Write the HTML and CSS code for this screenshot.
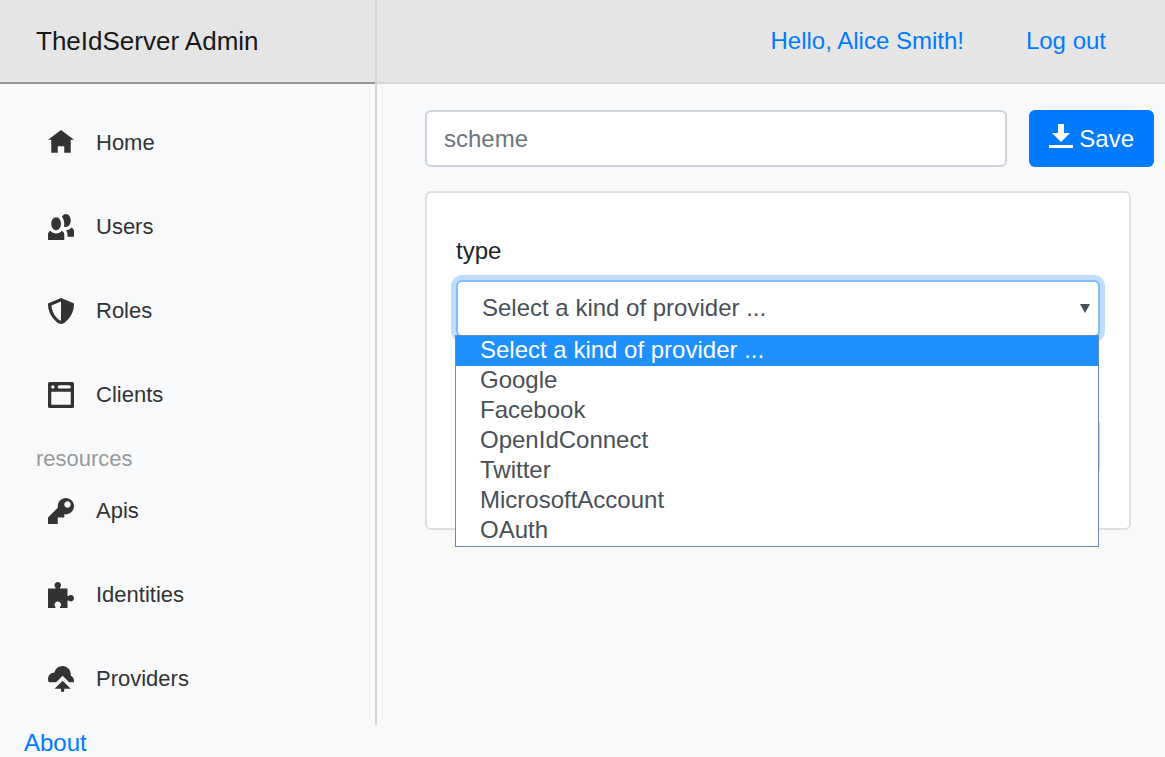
FILE: index.html
```html
<!DOCTYPE html>
<html lang="en">
<head>
<meta charset="utf-8">
<meta name="viewport" content="width=device-width, initial-scale=1">
<title>TheIdServer Admin</title>
<link rel="stylesheet" href="styles.css">
</head>
<body>
<div class="layout">
  <aside class="sidebar">
    <div class="brand">TheIdServer Admin</div>
    <nav class="menu">
      <ul class="menu-list">
        <li><a class="menu-link" href="#home"><svg class="icon" viewBox="0 0 8 8"><path d="M4 0l-4 3h1v4h2v-2h2v2h2v-4.030l1 .03-4-3z"/></svg>Home</a></li>
        <li><a class="menu-link" href="#users"><svg class="icon" viewBox="0 0 8 8"><path d="M5.500 0c-.51 0-.95.35-1.220.88.45.54.72 1.280.72 2.130 0 .29-.03.55-.09.81.19.11.38.19.59.19.83 0 1.500-.9 1.500-2s-.67-2-1.500-2zm-3 1c-.83 0-1.500.9-1.500 2s.67 2 1.500 2 1.500-.9 1.500-2-.67-2-1.500-2zm4.750 3.160c-.43.51-1.020.82-1.690.84.27.38.44.84.44 1.340v.66h2v-1.660c0-.52-.31-.97-.75-1.190zm-6.500 1c-.44.22-.75.67-.75 1.190v1.660h5v-1.660c0-.52-.31-.97-.75-1.190-.45.53-1.060.84-1.750.84s-1.300-.32-1.750-.84z"/></svg>Users</a></li>
        <li><a class="menu-link" href="#roles"><svg class="icon" viewBox="0 0 8 8"><path d="M4 0l-.19.09-3.500 1.470-.31.13v.31c0 1.660.67 3.120 1.470 4.190.4.53.83.97 1.250 1.280.42.31.83.53 1.280.53.46 0 .86-.22 1.280-.53.42-.31.85-.75 1.250-1.280.8-1.070 1.470-2.530 1.470-4.190v-.31l-.31-.13-3.500-1.470-.19-.09zm0 1.090v5.910c-.04 0-.33-.07-.66-.31s-.71-.63-1.060-1.090c-.64-.85-1.140-2.030-1.220-3.280l2.940-1.220z"/></svg>Roles</a></li>
        <li><a class="menu-link" href="#clients"><svg class="icon" viewBox="0 0 8 8"><path fill-rule="evenodd" d="M.5 0a.5.5 0 0 0-.5.5v7a.5.5 0 0 0 .5.5h7a.5.5 0 0 0 .5-.5v-7a.5.5 0 0 0-.5-.5h-7zm1 1c.28 0 .5.22.5.5s-.22.5-.5.5-.5-.22-.5-.5.22-.5.5-.5zm2 0h3c.28 0 .5.22.5.5s-.22.5-.5.5h-3c-.28 0-.5-.22-.5-.5s.22-.5.5-.5zm-2.500 2h6v4h-6v-4z"/></svg>Clients</a></li>
      </ul>
      <h2 class="menu-heading">resources</h2>
      <ul class="menu-list">
        <li><a class="menu-link" href="#apis"><svg class="icon" viewBox="0 0 8 8"><path fill-rule="evenodd" d="M5.500 0c-1.380 0-2.500 1.120-2.500 2.500 0 .16 0 .32.03.47l-3.030 3.030v2h3v-2h2v-1l.03-.03c.15.03.31.03.47.03 1.380 0 2.500-1.120 2.500-2.500s-1.120-2.500-2.500-2.500zm.5 1c.55 0 1 .45 1 1s-.45 1-1 1-1-.45-1-1 .45-1 1-1z"/></svg>Apis</a></li>
        <li><a class="menu-link" href="#identities"><svg class="icon" viewBox="0 0 8 8"><path d="M3 0c-.28 0-.54.1-.72.28-.18.18-.28.44-.28.72 0 .28.18.48.28.72.03.06.03.16.03.28h-2.310v6h2.310c0-.12 0-.22-.03-.28-.1-.24-.28-.44-.28-.72 0-.28.1-.54.28-.72.18-.18.44-.28.72-.28.28 0 .54.1.72.28.18.18.28.44.28.72 0 .28-.18.48-.28.72-.03.06-.03.16-.03.28h2.310v-2.310c.12 0 .22 0 .28.03.24.1.44.28.72.28.28 0 .54-.1.72-.28.18-.18.28-.44.28-.72 0-.28-.1-.54-.28-.72-.18-.18-.44-.28-.72-.28-.28 0-.48.18-.72.28-.06.03-.16.03-.28.03v-2.310h-2.310c0-.12 0-.22.03-.28.1-.24.28-.44.28-.72 0-.28-.1-.54-.28-.72-.18-.18-.44-.28-.72-.28z"/></svg>Identities</a></li>
        <li><a class="menu-link" href="#providers"><svg class="icon" viewBox="0 0 8 8"><path d="M4.500 0c-1.210 0-2.270.86-2.500 2-1.100 0-2 .9-2 2 0 .37.11.71.28 1h2.220l2-2 2 2h1.410c.06-.16.09-.32.09-.5 0-.65-.42-1.290-1-1.500v-.5c0-1.380-1.120-2.500-2.500-2.500zm0 4.500l-2.500 2.500h2v.5a.5.5 0 1 0 1 0v-.5h2l-2.500-2.500z"/></svg>Providers</a></li>
      </ul>
    </nav>
  </aside>
  <div class="page">
    <header class="topbar">
      <a href="#account">Hello, Alice Smith!</a>
      <a href="#logout">Log out</a>
    </header>
    <main class="content">
      <form>
        <div class="toolbar">
          <input class="control scheme" type="text" placeholder="scheme" aria-label="scheme">
          <button class="save" type="button"><svg class="save-icon" viewBox="0 0 8 8"><path d="M3 0v3h-2l3 3 3-3h-2v-3h-2zm-3 7v1h8v-1h-8z"/></svg>Save</button>
        </div>
        <section class="card">
          <label class="label" for="kind">type</label>
          <div class="select-wrap">
            <select class="control kind" id="kind">
              <option>Select a kind of provider ...</option>
              <option>Google</option>
              <option>Facebook</option>
              <option>OpenIdConnect</option>
              <option>Twitter</option>
              <option>MicrosoftAccount</option>
              <option>OAuth</option>
            </select>
            <svg class="caret" viewBox="0 0 10 9"><path d="M0 0h10L5 9z"/></svg>
            <ul class="options" role="listbox" aria-label="type">
              <li class="option active" role="option" aria-selected="true">Select a kind of provider ...</li>
              <li class="option" role="option">Google</li>
              <li class="option" role="option">Facebook</li>
              <li class="option" role="option">OpenIdConnect</li>
              <li class="option" role="option">Twitter</li>
              <li class="option" role="option">MicrosoftAccount</li>
              <li class="option" role="option">OAuth</li>
            </ul>
          </div>
          <input class="control display-name" type="text" aria-label="display name">
        </section>
      </form>
    </main>
  </div>
</div>
<footer class="footer"><a href="#about">About</a></footer>
</body>
</html>
```
FILE: styles.css
```css
* {
  box-sizing: border-box;
}

body {
  margin: 0;
  background: #f8f9fb;
  color: #212529;
  font: 24px/36px "Liberation Sans", Arial, sans-serif;
}

a {
  color: #007bff;
  text-decoration: none;
}

ul {
  margin: 0;
  padding: 0;
  list-style: none;
}

.layout {
  display: flex;
}

.sidebar {
  flex: none;
  width: 377px;
  padding-bottom: 16px;
  border-right: 2px solid #d6d6d6;
}

.brand {
  height: 84px;
  padding: 0 36px;
  border-bottom: 2px solid #959595;
  background: #e5e5e5;
  color: #181818;
  font-size: 26px;
  line-height: 82px;
}

.menu {
  padding: 29px 36px 0;
}

.menu-list {
  display: grid;
  gap: 24px;
}

.menu-link {
  display: flex;
  align-items: center;
  gap: 22px;
  height: 60px;
  padding-left: 12px;
  color: #333;
  font-size: 22px;
}

.icon {
  width: 26px;
  height: 26px;
  fill: #333;
}

.menu-heading {
  margin: 12px 0 0;
  color: #999;
  font-size: 22px;
  font-weight: 400;
  line-height: 44px;
}

.page {
  flex: 1;
  min-width: 0;
}

.topbar {
  display: flex;
  align-items: center;
  justify-content: flex-end;
  gap: 62px;
  height: 84px;
  padding-right: 59px;
  border-bottom: 2px solid #d6d6d6;
  background: #e6e6e6;
}

.content {
  padding: 26px 11px 0 48px;
}

.toolbar {
  display: flex;
  gap: 22px;
}

.control {
  display: block;
  width: 100%;
  height: 57px;
  padding: 0 17px;
  border: 2px solid #ced4da;
  border-radius: 6px;
  background: #fff;
  color: #495057;
  font: inherit;
}

.control::placeholder {
  color: #6c757d;
  opacity: 1;
}

.scheme {
  flex: 1;
  min-width: 0;
}

.save {
  display: flex;
  align-items: center;
  gap: 6px;
  height: 57px;
  padding: 0 20px;
  border: 0;
  border-radius: 6px;
  background: #007bff;
  color: #fff;
  font: inherit;
}

.save-icon {
  width: 24px;
  height: 24px;
  margin-bottom: 6px;
  fill: currentColor;
}

.card {
  margin: 24px 23px 0 0;
  padding: 40px 29px 53px;
  border: 2px solid #dfdfdf;
  border-radius: 6px;
  background: #fff;
}

.label {
  display: block;
  margin-bottom: 11px;
}

.select-wrap {
  position: relative;
}

.kind {
  appearance: none;
  padding: 0 24px 2px;
  border-color: #80bdff;
  box-shadow: 0 0 0 5px rgba(0, 123, 255, 0.25);
}

.caret {
  position: absolute;
  top: 24px;
  right: 10px;
  width: 10px;
  height: 9px;
  fill: #495057;
  pointer-events: none;
}

.options {
  position: absolute;
  top: 55px;
  right: 1px;
  left: -1px;
  border: 1px solid #6886c0;
  background: #fff;
  color: #495057;
}

.option {
  padding: 0 24px 2px;
  line-height: 28px;
}

.active {
  background: #1e90ff;
  color: #fff;
}

.display-name {
  margin-top: 81px;
}

.footer {
  padding: 4px 24px 0;
  line-height: 28px;
}
```
